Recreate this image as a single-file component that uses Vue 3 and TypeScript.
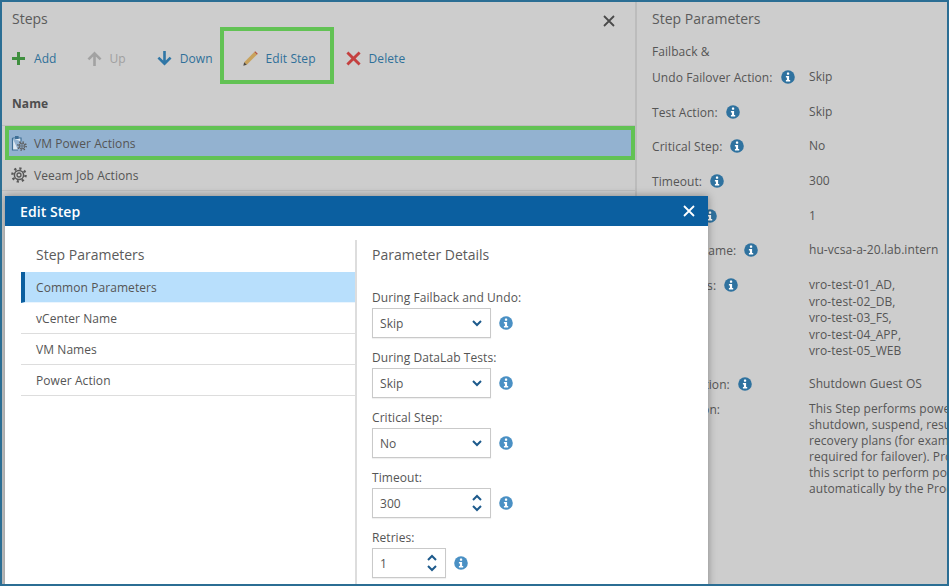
<script setup lang="ts">
interface Param { label: string; values: string[]; tight?: boolean }
const params: Param[] = [
  { label: 'Undo Failover Action:', values: ['Skip'] },
  { label: 'Test Action:', values: ['Skip'] },
  { label: 'Critical Step:', values: ['No'] },
  { label: 'Timeout:', values: ['300'] },
  { label: 'Retries:', values: ['1'] },
  { label: 'vCenter Name:', values: ['hu-vcsa-a-20.lab.intern'] },
  { label: 'VM Names:', values: ['vro-test-01_AD,', 'vro-test-02_DB,', 'vro-test-03_FS,', 'vro-test-04_APP,', 'vro-test-05_WEB'] },
  { label: 'Power Action:', values: ['Shutdown Guest OS'], tight: true },
]
const description: string[] = [
  'This Step performs power operations on VMs, such as',
  'shutdown, suspend, resume and restart, as part of',
  'recovery plans (for example, to shut down VMs not',
  'required for failover). Protected VMs can also use',
  'this script to perform power actions that are run',
  'automatically by the Product during the plan run.',
]
const navItems: string[] = ['Common Parameters', 'vCenter Name', 'VM Names', 'Power Action']
interface Field { label: string; value: string; kind: 'select' | 'number'; narrow?: boolean }
const fields: Field[] = [
  { label: 'During Failback and Undo:', value: 'Skip', kind: 'select' },
  { label: 'During DataLab Tests:', value: 'Skip', kind: 'select' },
  { label: 'Critical Step:', value: 'No', kind: 'select' },
  { label: 'Timeout:', value: '300', kind: 'number' },
  { label: 'Retries:', value: '1', kind: 'number', narrow: true },
]
</script>

<template>
  <div class="frame">
    <svg class="defs" aria-hidden="true">
      <symbol id="info" viewBox="0 0 14 14">
        <circle cx="7" cy="7" r="6.8" fill="currentColor" />
        <rect x="5.9" y="2.5" width="2.3" height="2.2" rx=".4" fill="#fff" />
        <path d="M4.9 5.9H8.1V10H9.2V11.5H4.9V10H5.9V7.4H4.9Z" fill="#fff" />
      </symbol>
      <symbol id="gear" viewBox="0 0 16 16">
        <circle cx="8" cy="8" r="6.6" fill="none" stroke="currentColor" stroke-width="2.4" stroke-dasharray="2.2 3" />
        <circle cx="8" cy="8" r="4.6" fill="none" stroke="currentColor" stroke-width="1.5" />
        <circle cx="8" cy="8" r="2" fill="none" stroke="currentColor" stroke-width="1.3" />
      </symbol>
    </svg>

    <section class="steps">
      <div class="steps-head">
        <h2 class="panel-title">Steps</h2>
        <svg class="close" viewBox="0 0 12 12"><path d="M1 1L11 11M11 1L1 11" stroke="#4a4a4a" stroke-width="1.8" fill="none" /></svg>
      </div>
      <div class="toolbar">
        <button class="tool add">
          <svg width="13" height="13" viewBox="0 0 13 13"><path d="M5 0H8V5H13V8H8V13H5V8H0V5H5Z" fill="#3f8f3f" /></svg>
          <span>Add</span>
        </button>
        <button class="tool up off">
          <svg width="15" height="15" viewBox="0 0 15 15"><path d="M7.5 0.5L14.5 7.5L12.7 9.2L8.8 5.4V15H6.2V5.4L2.3 9.2L0.5 7.5Z" fill="#a2a2a2" /></svg>
          <span>Up</span>
        </button>
        <button class="tool down">
          <svg width="15" height="15" viewBox="0 0 15 15"><path d="M7.5 14.5L14.5 7.5L12.7 5.8L8.8 9.6V0H6.2V9.6L2.3 5.8L0.5 7.5Z" fill="#2f76a6" /></svg>
          <span>Down</span>
        </button>
        <button class="tool edit">
          <svg width="15" height="15" viewBox="0 0 15 15">
            <path d="M1.2 11.2L11.3 1.1L13.9 3.7L3.8 13.8Z" fill="#c8a25c" />
            <path d="M11.3 1.1L12.2 .2L14.8 2.8L13.9 3.7Z" fill="#b5533f" />
            <path d="M1.2 11.2L3.8 13.8L.3 14.7Z" fill="#4f4a42" />
          </svg>
          <span>Edit Step</span>
        </button>
        <button class="tool del">
          <svg width="15" height="15" viewBox="0 0 15 15"><path d="M2.4 .5L7.5 5.4L12.6 .5L14.6 2.5L9.6 7.5L14.6 12.5L12.6 14.5L7.5 9.6L2.4 14.5L.4 12.5L5.4 7.5L.4 2.5Z" fill="#c4403f" /></svg>
          <span>Delete</span>
        </button>
      </div>
      <div class="name-head">Name</div>
      <div class="row selected">
        <svg class="row-icon" width="16" height="16" viewBox="0 0 16 16">
          <path d="M1.5 3H10V6.5M1.5 3V15H7" fill="#dfe9f2" stroke="#3f6f96" stroke-width="1.2" />
          <rect x="4" y="1" width="3.6" height="3" fill="#3f6f96" />
          <use href="#gear" x="6" y="6" width="10" height="10" class="gear-dark" />
        </svg>
        <span>VM Power Actions</span>
      </div>
      <div class="row plain">
        <svg class="row-icon gear-dark" width="16" height="16"><use href="#gear" width="16" height="16" /></svg>
        <span>Veeam Job Actions</span>
      </div>
    </section>

    <aside class="details">
      <h2 class="panel-title">Step Parameters</h2>
      <div class="failback">Failback &amp;</div>
      <div class="param-list">
        <div v-for="p in params" :key="p.label" class="param" :class="{ tight: p.tight }">
          <div class="param-label">
            <span>{{ p.label }}</span>
            <svg class="info dim"><use href="#info" width="14" height="14" /></svg>
          </div>
          <div class="param-value">
            <div v-for="v in p.values" :key="v">{{ v }}</div>
          </div>
        </div>
        <div class="param desc">
          <div class="param-label"><span>Description:</span></div>
          <div class="desc-text">
            <div v-for="line in description" :key="line">{{ line }}</div>
          </div>
        </div>
      </div>
    </aside>

    <div class="dialog">
      <header class="dialog-head">
        <span>Edit Step</span>
        <svg class="dialog-close" viewBox="0 0 12 12"><path d="M1 1L11 11M11 1L1 11" stroke="#fff" stroke-width="1.8" fill="none" /></svg>
      </header>
      <div class="dialog-body">
        <nav class="nav">
          <h3 class="sub-title">Step Parameters</h3>
          <div v-for="(item, i) in navItems" :key="item" class="nav-item" :class="{ active: i === 0 }">{{ item }}</div>
        </nav>
        <div class="form">
          <h3 class="sub-title">Parameter Details</h3>
          <div class="fields">
            <div v-for="f in fields" :key="f.label" class="field">
              <label class="field-label">{{ f.label }}</label>
              <div class="field-row">
                <div class="control" :class="{ narrow: f.narrow }">
                  <span>{{ f.value }}</span>
                  <svg v-if="f.kind === 'select'" class="chev" width="10" height="7" viewBox="0 0 10 7"><path d="M1 1L5 5L9 1" fill="none" stroke="#1d5a8c" stroke-width="2" /></svg>
                  <div v-else class="spin">
                    <svg width="10" height="7" viewBox="0 0 10 7"><path d="M1 6L5 2L9 6" fill="none" stroke="#1d5a8c" stroke-width="2" /></svg>
                    <svg width="10" height="7" viewBox="0 0 10 7"><path d="M1 1L5 5L9 1" fill="none" stroke="#1d5a8c" stroke-width="2" /></svg>
                  </div>
                </div>
                <svg class="info bright"><use href="#info" width="14" height="14" /></svg>
              </div>
            </div>
          </div>
        </div>
      </div>
    </div>
  </div>
</template>

<style scoped>
.frame {
  position: relative;
  box-sizing: border-box;
  width: 949px;
  height: 586px;
  display: flex;
  overflow: hidden;
  border: 2px solid #2b6e94;
  background: #cdcdcd;
  font-family: "Open Sans", "Noto Sans", sans-serif;
  font-size: 12px;
  line-height: 17px;
  letter-spacing: .07px;
  color: #555;
}
.defs { position: absolute; width: 0; height: 0; }
.panel-title { margin: 0; font-size: 14px; font-weight: 400; line-height: 20px; letter-spacing: 0; color: #5b5b5b; }

.steps { flex: 0 0 635px; box-sizing: border-box; border-right: 2px solid #bcbcbc; }
.steps-head { height: 25px; padding: 7px 20px 0 10px; box-sizing: border-box; display: flex; justify-content: space-between; align-items: flex-start; }
.close { width: 12px; height: 12px; margin: 6px 0 0; }

.toolbar { height: 57px; display: flex; padding-left: 10px; }
.tool {
  display: flex; align-items: center; gap: 9px;
  height: 57px; padding: 5px 0 0; box-sizing: border-box;
  border: 0; background: none;
  font: inherit; letter-spacing: inherit; color: #2f7099;
}
.up { margin-left: 31px; gap: 7px; }
.off { color: #a0a0a0; }
.down { margin-left: 31px; gap: 8px; }
.edit { margin-left: 7px; width: 114px; padding-left: 19px; gap: 8px; border: 4px solid #62c254; }
.del { margin-left: 12px; gap: 8px; }

.name-head { height: 42px; padding: 11px 0 0 10px; box-sizing: border-box; font-weight: 700; color: #4e4e4e; border-bottom: 1px solid #bdbdbd; }
.row { display: flex; align-items: center; gap: 7px; color: #555; }
.selected { margin-left: 3px; height: 34px; box-sizing: border-box; border: 4px solid #62c254; background: #93b2d0; padding-left: 2px; }
.plain { height: 31px; padding-left: 9px; box-sizing: border-box; border-bottom: 1px solid #bdbdbd; }
.row-icon { flex: none; }
.gear-dark { color: #585858; }

.details { flex: 1; min-width: 0; padding: 7px 0 0 15px; overflow: hidden; white-space: nowrap; }
.failback { margin-top: 14px; }
.param-list { margin-top: 9px; display: flex; flex-direction: column; gap: 17.67px; }
.param { display: grid; grid-template-columns: 157px 1fr; }
.param-label { display: flex; align-items: flex-start; gap: 8px; }
.param-value > div { line-height: 16.6px; }
.tight { margin-top: -2px; }
.desc { margin-top: -9px; }
.desc-text { line-height: 16px; }
.info { flex: none; width: 14px; height: 14px; margin-top: 1px; }
.dim { color: #2f729f; }
.bright { color: #4a90c4; margin-top: 0; }

.dialog {
  position: absolute; left: 3px; top: 194px; width: 703px; height: 400px;
  background: #fff; box-shadow: 0 0 8px rgba(0, 0, 0, .35);
}
.dialog-head {
  height: 30px; box-sizing: border-box; padding: 0 13px 0 15px;
  display: flex; justify-content: space-between; align-items: center;
  background: #0b5fa0; color: #fff; font-size: 14px; font-weight: 600;
}
.dialog-close { width: 12px; height: 12px; }
.dialog-body { display: flex; margin-top: 14px; padding-left: 16px; }
.nav { flex: 0 0 334px; }
.sub-title { margin: 0; height: 32px; padding-left: 15px; box-sizing: border-box; font-size: 14px; font-weight: 400; line-height: 30px; letter-spacing: 0; color: #5b5b5b; }
.nav-item { height: 31px; box-sizing: border-box; padding-left: 15px; line-height: 32px; border-bottom: 1px solid #ddd; color: #555; }
.active { padding-left: 11px; border-left: 4px solid #0b5fa0; background: #b8dffc; border-bottom-color: #eaf5fe; }

.form { flex: 1; border-left: 2px solid #ddd; height: 360px; }
.fields { margin-top: 17px; padding-left: 15px; display: flex; flex-direction: column; gap: 11px; }
.field-label { display: block; color: #555; margin-bottom: 2px; }
.field-row { display: flex; align-items: center; gap: 8px; }
.control {
  width: 119px; height: 30px; box-sizing: border-box; padding: 0 8px 0 7px;
  display: flex; justify-content: space-between; align-items: center;
  border: 1px solid #c9c9c9; box-shadow: 0 1px 1px rgba(0, 0, 0, .06); color: #555;
}
.narrow { width: 74px; }
.spin { display: flex; flex-direction: column; gap: 4px; }
.spin svg, .chev { display: block; }
</style>
